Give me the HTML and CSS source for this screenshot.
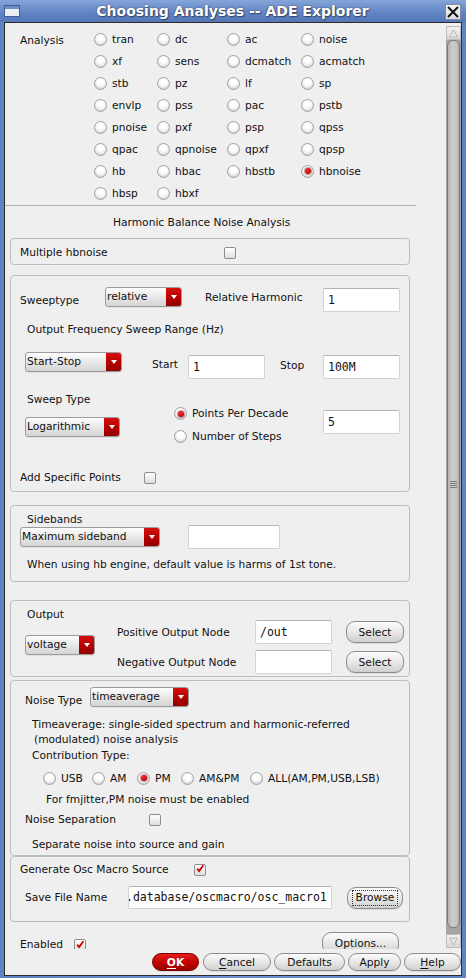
FILE: index.html
```html
<!DOCTYPE html>
<html>
<head>
<meta charset="utf-8">
<link rel="stylesheet" href="styles.css">
</head>
<body>
<div class="window">
  <div class="titlebar">
    <svg class="winicon" width="16" height="12" viewBox="0 0 16 12"><rect x="0.5" y="0.5" width="15" height="11" fill="#e9eef5" stroke="#3d5f97"/><rect x="1" y="1" width="14" height="3" fill="#6d8fc6"/></svg>
    <div class="title">Choosing Analyses -- ADE Explorer</div>
    <div class="closebtn"><svg width="14" height="14" viewBox="0 0 14 14"><path d="M2 2 L12 12 M12 2 L2 12" stroke="#111" stroke-width="2"/></svg></div>
  </div>
  <div class="client">
    <div class="main">
      <div class="viewport">
        <div class="analysis">
          <div class="lbl an-lbl">Analysis</div>
          <div class="agrid">
            <div class="ri"><span class="radio"></span>tran</div>
            <div class="ri"><span class="radio"></span>dc</div>
            <div class="ri"><span class="radio"></span>ac</div>
            <div class="ri"><span class="radio"></span>noise</div>
            <div class="ri"><span class="radio"></span>xf</div>
            <div class="ri"><span class="radio"></span>sens</div>
            <div class="ri"><span class="radio"></span>dcmatch</div>
            <div class="ri"><span class="radio"></span>acmatch</div>
            <div class="ri"><span class="radio"></span>stb</div>
            <div class="ri"><span class="radio"></span>pz</div>
            <div class="ri"><span class="radio"></span>lf</div>
            <div class="ri"><span class="radio"></span>sp</div>
            <div class="ri"><span class="radio"></span>envlp</div>
            <div class="ri"><span class="radio"></span>pss</div>
            <div class="ri"><span class="radio"></span>pac</div>
            <div class="ri"><span class="radio"></span>pstb</div>
            <div class="ri"><span class="radio"></span>pnoise</div>
            <div class="ri"><span class="radio"></span>pxf</div>
            <div class="ri"><span class="radio"></span>psp</div>
            <div class="ri"><span class="radio"></span>qpss</div>
            <div class="ri"><span class="radio"></span>qpac</div>
            <div class="ri"><span class="radio"></span>qpnoise</div>
            <div class="ri"><span class="radio"></span>qpxf</div>
            <div class="ri"><span class="radio"></span>qpsp</div>
            <div class="ri"><span class="radio"></span>hb</div>
            <div class="ri"><span class="radio"></span>hbac</div>
            <div class="ri"><span class="radio"></span>hbstb</div>
            <div class="ri"><span class="radio on"></span>hbnoise</div>
            <div class="ri"><span class="radio"></span>hbsp</div>
            <div class="ri"><span class="radio"></span>hbxf</div>
          </div>
        </div>
        <div class="sep"></div>
        <div class="heading">Harmonic Balance Noise Analysis</div>

        <div class="group g1">
          <div class="lbl w204">Multiple hbnoise</div>
          <span class="check"></span>
        </div>

        <div class="group g2">
          <div class="row r-sweep">
            <div class="lbl w85 mt7">Sweeptype</div>
            <div class="combo w77"><span class="ctext">relative</span><span class="carrow"></span></div>
            <div class="lbl relh mt4">Relative Harmonic</div>
            <div class="input w77 mt1">1</div>
          </div>
          <div class="lbl r-range">Output Frequency Sweep Range (Hz)</div>
          <div class="row r-startstop">
            <div class="combo w97"><span class="ctext">Start-Stop</span><span class="carrow"></span></div>
            <div class="lbl startl mt6">Start</div>
            <div class="input w77 mt3">1</div>
            <div class="lbl stopl mt7">Stop</div>
            <div class="input w77 mt3">100M</div>
          </div>
          <div class="row r-stype">
            <div class="col-left">
              <div class="lbl ml2">Sweep Type</div>
              <div class="combo w95 mt11"><span class="ctext">Logarithmic</span><span class="carrow"></span></div>
            </div>
            <div class="col-mid">
              <div class="ri2"><span class="radio on"></span>Points Per Decade</div>
              <div class="ri2"><span class="radio"></span>Number of Steps</div>
            </div>
            <div class="input w77 mt17">5</div>
          </div>
          <div class="row r-addpts">
            <div class="lbl w124">Add Specific Points</div>
            <span class="check"></span>
          </div>
        </div>

        <div class="group g3">
          <div class="lbl side-lbl">Sidebands</div>
          <div class="row r-side">
            <div class="combo w140 mt2"><span class="ctext">Maximum sideband</span><span class="carrow"></span></div>
            <div class="input w92 sideinput"></div>
          </div>
          <div class="lbl side-note">When using hb engine, default value is harms of 1st tone.</div>
        </div>

        <div class="group g4">
          <div class="out-left">
            <div class="lbl ml2 mt7">Output</div>
            <div class="combo w70 mt14"><span class="ctext">voltage</span><span class="carrow"></span></div>
          </div>
          <div class="out-right">
            <div class="orow">
              <div class="lbl w138">Positive Output Node</div>
              <div class="input w77">/out</div>
              <div class="btn selbtn">Select</div>
            </div>
            <div class="orow orow2">
              <div class="lbl w138">Negative Output Node</div>
              <div class="input w77"></div>
              <div class="btn selbtn">Select</div>
            </div>
          </div>
        </div>

        <div class="group g5">
          <div class="row r-ntype">
            <div class="lbl w65 mt7">Noise Type</div>
            <div class="combo w99"><span class="ctext">timeaverage</span><span class="carrow"></span></div>
          </div>
          <div class="lbl desc">Timeaverage: single-sided spectrum and harmonic-referred<br><span class="desc2">(modulated) noise analysis</span></div>
          <div class="lbl contrib">Contribution Type:</div>
          <div class="row r-contrib">
            <div class="ri3 w49"><span class="radio"></span>USB</div>
            <div class="ri3 w45"><span class="radio"></span>AM</div>
            <div class="ri3 w44"><span class="radio on"></span>PM</div>
            <div class="ri3 w69"><span class="radio"></span>AM&amp;PM</div>
            <div class="ri3"><span class="radio"></span>ALL(AM,PM,USB,LSB)</div>
          </div>
          <div class="lbl fmnote">For fmjitter,PM noise must be enabled</div>
          <div class="row r-nsep">
            <div class="lbl w124">Noise Separation</div>
            <span class="check"></span>
          </div>
          <div class="lbl sepnote">Separate noise into source and gain</div>
        </div>

        <div class="group g6">
          <div class="row r-gen">
            <div class="lbl w174">Generate Osc Macro Source</div>
            <span class="check checked"><svg width="12" height="12" viewBox="0 0 12 12"><path d="M2.5 5.5 L5 8.5 L10 1.5" fill="none" stroke="#d00000" stroke-width="2.2"/></svg></span>
          </div>
          <div class="row r-save">
            <div class="lbl w103">Save File Name</div>
            <div class="input w204 pathinput">.database/oscmacro/osc_macro1</div>
            <div class="btn browse"><span class="focus">Browse</span></div>
          </div>
        </div>

        <div class="row r-enabled">
          <div class="lbl w54 mt6">Enabled</div>
          <span class="check checked mt7"><svg width="12" height="12" viewBox="0 0 12 12"><path d="M2.5 5.5 L5 8.5 L10 1.5" fill="none" stroke="#d00000" stroke-width="2.2"/></svg></span>
          <div class="btn options">Options...</div>
        </div>
      </div>
      <div class="scrollcol">
        <div class="sbar">
          <div class="sarrow"><svg width="13" height="13" viewBox="0 0 13 13"><path d="M2.5 10 L6.5 3 L10.5 10 Z" fill="#e8e8e8" stroke="#b8b8b8"/></svg></div>
          <div class="thumb"><span class="grip"></span></div>
          <div class="sarrow down"><svg width="13" height="13" viewBox="0 0 13 13"><path d="M2.5 3 L6.5 10 L10.5 3 Z" fill="#e8e8e8" stroke="#b8b8b8"/></svg></div>
        </div>
      </div>
    </div>
    <div class="buttonbar">
      <div class="btn okbtn"><u>O</u>K</div>
      <div class="btn cancelbtn"><u>C</u>ancel</div>
      <div class="btn defbtn">Defaults</div>
      <div class="btn applybtn">Apply</div>
      <div class="btn helpbtn"><u>H</u>elp</div>
    </div>
  </div>
</div>
</body>
</html>
```

FILE: styles.css
```css
* { box-sizing: border-box; margin: 0; padding: 0; }
html, body { width: 466px; height: 978px; overflow: hidden; }
body {
  font-family: "DejaVu Sans", "Noto Sans", sans-serif;
  font-size: 8pt;
  color: #111;
  background: #5b7fbf;
}
.window {
  width: 466px;
  height: 978px;
  display: flex;
  flex-direction: column;
  padding: 0 4px 2px 4px;
  background: linear-gradient(90deg, #5f83c2, #6f92cf 50%, #5f83c2);
}
.titlebar {
  height: 22px;
  margin: 0 -4px;
  display: flex;
  align-items: center;
  background: linear-gradient(#86a6da, #5f83c3 60%, #5577b8);
}
.winicon { margin-left: 4px; flex: none; }
.title {
  flex: 1;
  text-align: center;
  color: #fff;
  font-weight: bold;
  font-size: 14px;
  text-shadow: 0 0 2px rgba(0,0,0,0.55), 1px 1px 1px rgba(0,0,0,0.35);
}
.closebtn {
  width: 16px;
  height: 16px;
  margin-right: 5px;
  margin-top: 1px;
  background: linear-gradient(#f6f6f6, #dcdcdc);
  border: 1px solid #7c8aa3;
  display: flex;
  align-items: center;
  justify-content: center;
}
.client {
  flex: 1;
  border: 1px solid #2b2b2b;
  background: #efefef;
  display: flex;
  flex-direction: column;
}
.main { height: 926px; display: flex; }
.viewport {
  width: 441px;
  height: 926px;
  overflow: hidden;
  padding-top: 5px;
}
.lbl { line-height: 13px; white-space: nowrap; }

/* analysis grid */
.analysis { display: flex; }
.an-lbl { margin-left: 15px; width: 74px; padding-top: 6px; }
.agrid {
  display: grid;
  grid-template-columns: 63px 70px 74px 74px;
  grid-auto-rows: 22px;
}
.ri { display: flex; align-items: center; white-space: nowrap; }
.radio {
  width: 13px;
  height: 13px;
  border-radius: 50%;
  border: 1px solid #a2a2a2;
  background: radial-gradient(circle at 50% 35%, #ffffff 30%, #d6d6d6 100%);
  margin-right: 5px;
  flex: none;
  display: flex;
  align-items: center;
  justify-content: center;
  box-shadow: inset 0 -1px 1px rgba(0,0,0,0.08);
}
.radio.on::after {
  content: "";
  width: 6px;
  height: 6px;
  border-radius: 50%;
  background: radial-gradient(circle at 40% 35%, #ff3030, #c00000 70%);
  box-shadow: 0 0 0 1px rgba(90,0,0,0.35);
}
.sep { width: 411px; height: 1px; background: #b2b2b2; margin-top: 1px; }
.heading { padding: 10px 0 9px 108px; line-height: 13px; }

/* group boxes */
.group {
  margin-left: 5px;
  width: 400px;
  border: 1px solid #bdbdbd;
  border-radius: 4px;
}
.g1 { height: 27px; display: flex; align-items: center; padding: 2px 0 0 9px; }
.g2 { height: 217px; margin-top: 10px; }
.g3 { height: 77px; margin-top: 13px; }
.g4 { height: 77px; margin-top: 18px; display: flex; }
.g5 { height: 176px; margin-top: 3px; }
.g6 { height: 66px; }

.row { display: flex; align-items: flex-start; }
.check {
  width: 12px;
  height: 12px;
  border: 1px solid #8e8e8e;
  border-radius: 2px;
  background: linear-gradient(#ffffff, #dedede);
  flex: none;
  display: flex;
  align-items: center;
  justify-content: center;
}
.check svg { display: block; margin-top: -1px; }

.combo {
  height: 20px;
  display: flex;
  border: 1px solid #9c9c9c;
  border-radius: 3px;
  background: linear-gradient(#fdfdfd, #e4e4e4 60%, #d4d4d4);
  flex: none;
  overflow: hidden;
  box-shadow: 0 1px 0 rgba(0,0,0,0.06);
}
.ctext { flex: 1; padding-left: 1px; line-height: 17px; white-space: nowrap; overflow: hidden; }
.carrow {
  width: 16px;
  margin: -1px -1px -1px 0;
  background: linear-gradient(#d81010, #b00000 60%, #8f0000);
  border-radius: 0 3px 3px 0;
  position: relative;
}
.carrow::after {
  content: "";
  position: absolute;
  left: 5px;
  top: 8px;
  border-left: 3.5px solid transparent;
  border-right: 3.5px solid transparent;
  border-top: 4px solid #fff;
}
.input {
  height: 24px;
  background: #fff;
  border: 1px solid #d2d2d2;
  border-top-color: #b4b4b4;
  border-radius: 2px;
  font-family: "DejaVu Sans Mono", "Liberation Mono", monospace;
  font-size: 11.5px;
  line-height: 22px;
  padding-left: 4px;
  white-space: nowrap;
  overflow: hidden;
  flex: none;
}
.btn {
  height: 22px;
  border: 1px solid #8c8c8c;
  border-radius: 9px;
  background: linear-gradient(#fcfcfc, #e6e6e6 55%, #cfcfcf);
  display: flex;
  align-items: center;
  justify-content: center;
  line-height: 13px;
  white-space: nowrap;
  flex: none;
  box-shadow: 0 1px 0 rgba(0,0,0,0.08);
}

/* utility widths / offsets */
.w54 { width: 54px; flex: none; }
.w65 { width: 65px; flex: none; }
.w70 { width: 70px; }
.w77 { width: 77px; }
.w85 { width: 85px; flex: none; }
.w92 { width: 92px; }
.w95 { width: 95px; }
.w97 { width: 97px; }
.w99 { width: 99px; }
.w103 { width: 103px; flex: none; }
.w124 { width: 124px; flex: none; }
.w138 { width: 138px; flex: none; }
.w140 { width: 140px; }
.w174 { width: 174px; flex: none; }
.w204 { width: 204px; }
.mt1 { margin-top: 1px; }
.mt2 { margin-top: 2px; }
.mt3 { margin-top: 3px; }
.mt4 { margin-top: 4px; }
.mt5 { margin-top: 5px; }
.mt6 { margin-top: 6px; }
.mt7 { margin-top: 7px; }
.mt11 { margin-top: 11px; }
.mt14 { margin-top: 14px; }
.mt17 { margin-top: 17px; }
.ml2 { margin-left: 2px; }

/* group 1 */
.g1 .lbl.w204 { width: 204px; flex: none; }

/* group 2 */
.r-sweep { margin: 11px 0 0 9px; height: 25px; }
.relh { margin-left: 23px; width: 118px; flex: none; }
.r-range { margin: 11px 0 0 16px; }
.r-startstop { margin: 16px 0 0 14px; height: 27px; }
.startl { margin-left: 30px; width: 36px; flex: none; }
.stopl { margin-left: 15px; width: 43px; flex: none; }
.r-stype { margin: 14px 0 0 14px; }
.col-left { width: 149px; flex: none; }
.col-mid { width: 149px; flex: none; margin-top: 9px; }
.ri2 { height: 23px; display: flex; align-items: center; white-space: nowrap; }
.r-addpts { margin: 23px 0 0 9px; height: 13px; align-items: center; }

/* group 3 */
.side-lbl { margin: 7px 0 0 16px; }
.r-side { margin: -1px 0 0 9px; height: 24px; }
.sideinput { margin-left: 28px; }
.side-note { margin: 9px 0 0 16px; }

/* group 4 */
.out-left { width: 92px; margin-left: 14px; flex: none; }
.out-right { margin-top: 19px; }
.orow { display: flex; align-items: center; height: 24px; }
.orow2 { margin-top: 6px; }
.selbtn { width: 58px; margin-left: 14px; }

/* group 5 */
.r-ntype { margin: 6px 0 0 14px; height: 20px; }
.desc { margin: 10px 0 0 21px; line-height: 15px; }
.desc2 { padding-left: 2px; }
.contrib { margin: 2px 0 0 21px; }
.r-contrib { margin: 5px 0 0 32px; height: 22px; align-items: center; }
.ri3 { display: flex; align-items: center; white-space: nowrap; flex: none; }
.w49 { width: 49px; }
.w45 { width: 45px; }
.w44 { width: 44px; }
.w69 { width: 69px; }
.fmnote { margin: 4px 0 0 35px; }
.r-nsep { margin: 7px 0 0 14px; height: 13px; align-items: center; }
.sepnote { margin: 12px 0 0 21px; }

/* group 6 */
.r-gen { margin: 6px 0 0 9px; height: 13px; align-items: center; }
.r-save { margin: 10px 0 0 14px; height: 23px; align-items: center; }
.pathinput { height: 23px; padding-left: 0; text-indent: -3px; line-height: 21px; }
.browse { width: 56px; margin-left: 15px; }
.focus { border: 1px dotted #333; padding: 1px 3px; line-height: 12px; }

/* enabled row */
.r-enabled { margin: 10px 0 0 15px; }
.options { width: 77px; margin-left: 236px; }

/* scrollbar */
.scrollcol { width: 15px; padding: 3px 0 1px 0; display: flex; }
.sbar {
  flex: 1;
  display: flex;
  flex-direction: column;
  background: #a5a5a5;
}
.sarrow {
  height: 14px;
  background: linear-gradient(#f2f2f2, #d8d8d8);
  border: 1px solid #bdbdbd;
  display: flex;
  align-items: center;
  justify-content: center;
}
.sarrow.down { margin-top: 6px; }
.thumb {
  flex: 1;
  margin: 0 1px;
  border: 1px solid #7a7a7a;
  border-radius: 6px;
  background: linear-gradient(90deg, #b4b4b4, #cbcbcb 40%, #c4c4c4 80%, #a9a9a9);
  display: flex;
  align-items: center;
  justify-content: center;
}
.grip {
  width: 7px;
  height: 7px;
  background: repeating-linear-gradient(#7d7d7d 0 1px, transparent 1px 2px);
}

/* bottom buttons */
.buttonbar {
  flex: 1;
  display: flex;
  padding: 4px 0 0 147px;
  align-items: flex-start;
}
.buttonbar .btn { height: 18px; border-radius: 9px; }
.okbtn {
  width: 47px;
  color: #fff;
  font-weight: bold;
  border-color: #7a0000;
  background: linear-gradient(#e41c1c, #c00000 55%, #9c0000);
}
.cancelbtn { width: 68px; margin-left: 4px; }
.defbtn { width: 71px; margin-left: 3px; }
.applybtn { width: 53px; margin-left: 3px; }
.helpbtn { width: 57px; margin-left: 3px; }
u { text-decoration-thickness: 1px; text-underline-offset: 2px; }
```
